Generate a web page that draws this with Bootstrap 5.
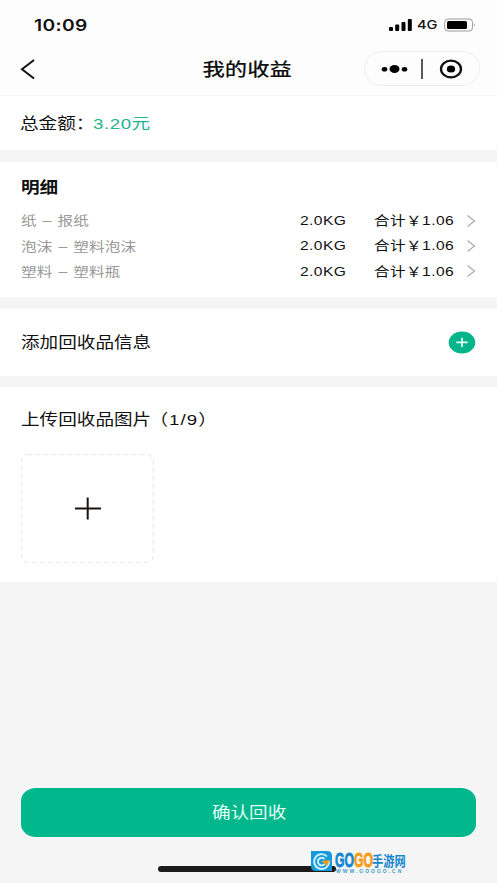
<!DOCTYPE html>
<html lang="zh-CN">
<head>
<meta charset="utf-8">
<meta name="viewport" content="width=device-width, initial-scale=1">
<title>我的收益</title>
<link href="https://cdn.jsdelivr.net/npm/bootstrap@5.3.0/dist/css/bootstrap.min.css" rel="stylesheet">
<style>
body{background:#f5f5f5;color:#111;font-family:"Liberation Sans","Noto Sans CJK SC",sans-serif;font-size:13px;line-height:1.2}
.screen{width:497px;height:883px}
.wide{display:inline-block;white-space:nowrap;transform:scaleX(1.2);transform-origin:left center}
.wide-center{transform-origin:center}
.status{height:50px;padding:1px 21px 0 34px;background:#fdfdfd}
.clock{font:600 16px/1.2 Inter,sans-serif;letter-spacing:.3px}
.net{font:500 12.2px/1.2 Inter,sans-serif;width:22px}
.titlebar{height:46px;padding:0 17px 8px 20px;background:#fdfdfd;border-bottom:1px solid #f6f6f6}
.page-title{font-size:18.6px;font-weight:500;margin-right:5px;padding-top:3px}
.capsule{width:116px;height:35px;border:1px solid #eee;border-radius:18px}
.panel{background:#fff;padding-left:21px;padding-right:21px}
.label{font-size:15.5px}
.total{height:54px;margin-bottom:12px;padding-top:2px;padding-left:20px}
.total-name{width:73px}
.green{color:#1fb58f;letter-spacing:.5px}
.details{height:135px;margin-bottom:12px;padding-top:16px}
.head{font-size:15.5px;font-weight:700;height:20px;line-height:20px}
.line-item{height:25.4px}
.items{margin-top:10px}
.kind{color:#999;letter-spacing:.1px;word-spacing:1.3px;padding-top:1px}
.weight{width:74px;letter-spacing:.35px}
.price{width:93px;letter-spacing:.35px}
.adder{height:67px;margin-bottom:11px}
.adder .wide{padding-top:2px}
.upload{height:195px;padding-top:22px}
.upload .label{height:22px;line-height:22px}
.tally{letter-spacing:.9px;margin-left:-1.5px}
.drop{width:133px;height:109px;margin-top:23px}
.confirm{height:49px;border-radius:15px/13px;background:#02b78c;color:#e2fff7;border:0;font-size:15.5px}
.confirm .wide{padding-left:1px}
.confirm-wrap{padding:0 21px 46px}
.home-bar{left:158px;top:866px;width:178px;height:6px;border-radius:3px;background:#1b1b1b}
.brand{left:310px;top:850px;width:98px;height:26px}
.brand-name{left:25px;top:0;font:700 20px/20px "Liberation Sans",sans-serif;transform:scaleX(.61);transform-origin:left;white-space:nowrap;color:#1687cf;-webkit-text-stroke:.8px currentColor}
.brand-name b{color:#f59b1a}
.brand-cn{left:62px;top:0;font:700 14px/20px "Noto Sans CJK SC",sans-serif;transform:scaleX(.8);transform-origin:left;white-space:nowrap;color:#1687cf}
.brand-url{left:26px;top:19px;font:700 5px/5px "Liberation Sans",sans-serif;letter-spacing:2px;white-space:nowrap;color:#3b9bc9}
</style>
</head>
<body>
<main class="screen position-relative d-flex flex-column overflow-hidden">
  <header>
    <div class="status d-flex align-items-center justify-content-between">
      <span class="wide clock">10:09</span>
      <div class="d-flex align-items-center">
        <svg width="24" height="12" viewBox="0 0 24 12"><rect y="8" width="4" height="4" rx="1"/><rect x="6.2" y="5.5" width="4" height="6.5" rx="1"/><rect x="12.5" y="3" width="4" height="9" rx="1"/><rect x="18.8" width="4" height="12" rx="1"/></svg>
        <span class="net ms-1"><span class="wide">4G</span></span>
        <svg class="ms-1" width="33" height="14" viewBox="0 0 33 14"><rect x="1.6" y="1" width="28" height="12" rx="3.5" fill="#fff" stroke="#999"/><rect x="4" y="3" width="20" height="8" rx="1.5"/><path d="M31.3 5v4q1.6-2 0-4" fill="#888"/></svg>
      </div>
    </div>
    <nav class="titlebar d-flex align-items-center justify-content-between">
      <div class="capsule border-0 d-flex align-items-center"><svg width="16" height="22" viewBox="0 0 16 22" fill="none" stroke="#111" stroke-width="2"><path d="M14 2 2 11.3 14 20.5"/></svg></div>
      <h1 class="page-title wide wide-center mb-0">我的收益</h1>
      <div class="capsule">
        <svg class="d-block" width="114" height="33" viewBox="0 0 114 33"><ellipse cx="19.5" cy="17.3" rx="2.8" ry="2.3"/><ellipse cx="29.5" cy="17" rx="5" ry="4"/><ellipse cx="39.5" cy="17.3" rx="2.8" ry="2.3"/><path d="M57 7v20" stroke="#222" stroke-width="1.5"/><ellipse cx="86" cy="17" rx="10" ry="8.3" fill="none" stroke="#111" stroke-width="2.3"/><ellipse cx="86" cy="17" rx="4.2" ry="3.5"/></svg>
      </div>
    </nav>
  </header>
  <section class="panel total label d-flex align-items-center">
    <span class="total-name"><span class="wide">总金额：</span></span><span class="wide green">3.20元</span>
  </section>
  <section class="panel details">
    <h2 class="head mb-0"><span class="wide">明细</span></h2>
    <div class="items">
      <div class="line-item d-flex align-items-center"><span class="kind me-auto"><span class="wide">纸 – 报纸</span></span><span class="weight"><span class="wide">2.0KG</span></span><span class="price"><span class="wide">合计￥1.06</span></span><svg width="9" height="12" viewBox="0 0 9 12" fill="none" stroke="#aaa" stroke-width="1.2"><path d="m.5.5 7 5.5-7 5.5"/></svg></div>
      <div class="line-item d-flex align-items-center"><span class="kind me-auto"><span class="wide">泡沫 – 塑料泡沫</span></span><span class="weight"><span class="wide">2.0KG</span></span><span class="price"><span class="wide">合计￥1.06</span></span><svg width="9" height="12" viewBox="0 0 9 12" fill="none" stroke="#aaa" stroke-width="1.2"><path d="m.5.5 7 5.5-7 5.5"/></svg></div>
      <div class="line-item d-flex align-items-center"><span class="kind me-auto"><span class="wide">塑料 – 塑料瓶</span></span><span class="weight"><span class="wide">2.0KG</span></span><span class="price"><span class="wide">合计￥1.06</span></span><svg width="9" height="12" viewBox="0 0 9 12" fill="none" stroke="#aaa" stroke-width="1.2"><path d="m.5.5 7 5.5-7 5.5"/></svg></div>
    </div>
  </section>
  <section class="panel adder label d-flex align-items-center justify-content-between">
    <span class="wide">添加回收品信息</span>
    <svg class="mb-0" width="28" height="24" viewBox="0 1 28 24"><ellipse cx="14" cy="12.5" rx="13.3" ry="11" fill="#05b58a"/><path d="M8.3 12.3h11.4M14 7.7v9.2" stroke="#e8fffa" stroke-width="1.8"/></svg>
  </section>
  <section class="panel upload">
    <div class="label"><span class="wide">上传回收品图片<span class="tally">（1/9）</span></span></div>
    <svg class="drop d-block" viewBox="0 0 133 109"><rect x=".7" y=".7" width="131.6" height="107.6" rx="6" fill="none" stroke="#ececec" stroke-width="1.2" stroke-dasharray="5 3"/><path d="M54 54.5h26M66.7 43.5v22" stroke="#1b1313" stroke-width="2"/></svg>
  </section>
  <div class="confirm-wrap mt-auto">
    <button class="btn confirm w-100 p-0" type="button"><span class="wide wide-center">确认回收</span></button>
  </div>
  <div class="home-bar position-absolute"></div>
  <div class="brand position-absolute">
    <svg class="d-block" width="23" height="22" viewBox="0 0 23 22"><path d="M5 1h12q5 0 5 5v15H6q-5 0-5-5V1z" fill="#159bdc"/><path d="M17 6.5A7.4 7.4 0 1 0 19 12h-6M14.5 9a3.8 3.8 0 1 0 .2 5" fill="none" stroke="#d9f6ff" stroke-width="1.8"/><path d="m11 11 9-1-3 6-2-2z" fill="#f39a26"/></svg>
    <span class="brand-name position-absolute">GO<b>GO</b></span><span class="brand-cn position-absolute">手游网</span>
    <span class="brand-url position-absolute">WWW.GOOGO.CN</span>
  </div>
</main>
<script src="https://cdn.jsdelivr.net/npm/bootstrap@5.3.0/dist/js/bootstrap.bundle.min.js"></script>
</body>
</html>
